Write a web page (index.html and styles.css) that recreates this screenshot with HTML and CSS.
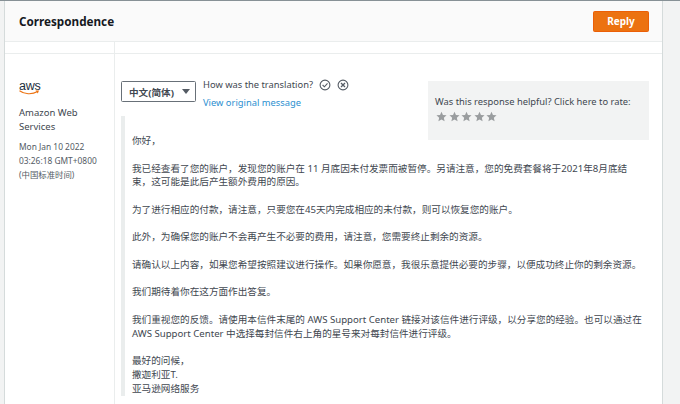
FILE: index.html
```html
<!DOCTYPE html>
<html lang="zh-CN">
<head>
<meta charset="utf-8">
<title>Correspondence</title>
<link rel="stylesheet" href="styles.css">
</head>
<body>
<main class="panel">
  <header class="panel-head">
    <h2 class="panel-title">Correspondence</h2>
    <button class="reply-btn">Reply</button>
  </header>
  <div class="table-head"><div class="head-left"></div><div class="head-right"></div></div>
  <section class="message">
    <aside class="sender">
      <div class="logo">
        <span class="logo-text">aws</span>
        <svg class="logo-smile" width="21" height="6" viewBox="0 0 21 6"><path d="M0.5 0.8C5 4.2 13 4.8 18.6 1.6" fill="none" stroke="#ec7211" stroke-width="1.1"/><path d="M16.6 0.6L20 0.4L18.8 3.4Z" fill="#ec7211"/></svg>
      </div>
      <div class="sender-name">Amazon Web Services</div>
      <div class="sender-date">Mon Jan 10 2022 03:26:18 GMT+0800 (中国标准时间)</div>
    </aside>
    <div class="content">
      <div class="toolbar">
        <div class="lang-select"><span>中文(简体)</span><i class="caret"></i></div>
        <div class="translate">
          <div class="translate-q">
            <span>How was the translation?</span>
            <svg class="tr-icon" width="12" height="12" viewBox="0 0 12 12"><circle cx="6" cy="6" r="4.9" fill="none" stroke="#545b64" stroke-width="1.1"/><path d="M3.6 6L5.4 7.8L8.5 4.4" fill="none" stroke="#545b64" stroke-width="1.1"/></svg>
            <svg class="tr-icon" width="12" height="12" viewBox="0 0 12 12"><circle cx="6" cy="6" r="4.9" fill="none" stroke="#545b64" stroke-width="1.1"/><path d="M4 4L8 8M8 4L4 8" fill="none" stroke="#545b64" stroke-width="1.3"/></svg>
          </div>
          <a class="view-original">View original message</a>
        </div>
        <div class="rate-box">
          <div class="rate-text">Was this response helpful? Click here to rate:</div>
          <div class="stars">
            <svg width="11" height="11" viewBox="0 0 24 24"><path class="star" d="M12 1.5l3.2 7.2 7.8.8-5.9 5.2 1.7 7.7L12 18.4l-6.8 4 1.7-7.7L1 9.5l7.8-.8z"/></svg>
            <svg width="11" height="11" viewBox="0 0 24 24"><path class="star" d="M12 1.5l3.2 7.2 7.8.8-5.9 5.2 1.7 7.7L12 18.4l-6.8 4 1.7-7.7L1 9.5l7.8-.8z"/></svg>
            <svg width="11" height="11" viewBox="0 0 24 24"><path class="star" d="M12 1.5l3.2 7.2 7.8.8-5.9 5.2 1.7 7.7L12 18.4l-6.8 4 1.7-7.7L1 9.5l7.8-.8z"/></svg>
            <svg width="11" height="11" viewBox="0 0 24 24"><path class="star" d="M12 1.5l3.2 7.2 7.8.8-5.9 5.2 1.7 7.7L12 18.4l-6.8 4 1.7-7.7L1 9.5l7.8-.8z"/></svg>
            <svg width="11" height="11" viewBox="0 0 24 24"><path class="star" d="M12 1.5l3.2 7.2 7.8.8-5.9 5.2 1.7 7.7L12 18.4l-6.8 4 1.7-7.7L1 9.5l7.8-.8z"/></svg>
          </div>
        </div>
      </div>
      <blockquote class="body-text">
        <p>你好，</p>
        <p>我已经查看了您的账户，发现您的账户在 11 月底因未付发票而被暂停。另请注意，您的免费套餐将于2021年8月底结束，这可能是此后产生额外费用的原因。</p>
        <p>为了进行相应的付款，请注意，只要您在45天内完成相应的未付款，则可以恢复您的账户。</p>
        <p>此外，为确保您的账户不会再产生不必要的费用，请注意，您需要终止剩余的资源。</p>
        <p>请确认以上内容，如果您希望按照建议进行操作。如果你愿意，我很乐意提供必要的步骤，以便成功终止你的剩余资源。</p>
        <p>我们期待着你在这方面作出答复。</p>
        <p>我们重视您的反馈。请使用本信件末尾的 AWS Support Center 链接对该信件进行评级，以分享您的经验。也可以通过在 AWS Support Center 中选择每封信件右上角的星号来对每封信件进行评级。</p>
        <p>最好的问候，<br>撒迦利亚T.<br>亚马逊网络服务</p>
      </blockquote>
    </div>
  </section>
</main>
</body>
</html>
```
FILE: styles.css
```css
* { box-sizing: border-box; }
html, body { margin: 0; height: 100%; overflow: hidden; }
body {
  background: #f2f3f3;
  border-top: 1px solid #879196;
  padding: 0 17px 0 4px;
  font-family: "Noto Sans", "Noto Sans CJK SC", sans-serif;
  color: #16191f;
  font-size: 9.35px;
}
.panel {
  background: #fff;
  border-left: 1px solid #d5dbdb;
  border-right: 1px solid #d5dbdb;
  height: 403px;
  overflow: hidden;
}
.panel-head {
  height: 41px;
  background: #fafafa;
  border-bottom: 1px solid #eaeded;
  display: flex;
  align-items: center;
  justify-content: space-between;
  padding: 0 13px 0 14px;
}
.panel-title { margin: 0 0 1px; font-size: 11.7px; font-weight: 700; color: #16191f; }
.reply-btn {
  width: 56px;
  height: 21px;
  background: #ec7211;
  border: 1px solid #eb5f07;
  border-radius: 1.5px;
  color: #fff;
  font: 700 10px "Noto Sans", sans-serif;
  padding: 0;
}
.table-head { display: flex; height: 12px; border-bottom: 1px solid #eaeded; }
.head-left { width: 110px; border-right: 1px solid #eaeded; }
.head-right { flex: 1; }
.message { display: flex; height: 350px; }
.sender { width: 110px; border-right: 1px solid #eaeded; padding: 27px 6px 0 14px; flex: none; }
.logo { position: relative; width: 22px; height: 15px; }
.logo-text { display: block; font: 400 12.5px/10px "Liberation Sans", sans-serif; color: #232f3e; letter-spacing: -0.2px; }
.logo-smile { position: absolute; left: 0; top: 9px; }
.sender-name { margin-top: 10px; font-size: 9.5px; line-height: 14px; color: #414750; }
.sender-date { margin-top: 6px; font-size: 8.4px; line-height: 14px; color: #545b64; }
.content { flex: 1; min-width: 0; padding: 27px 13px 0 6px; }
.toolbar { display: flex; align-items: flex-start; }
.lang-select {
  width: 75px;
  height: 21px;
  border: 1px solid #687078;
  border-radius: 1.5px;
  display: flex;
  align-items: center;
  justify-content: space-between;
  padding: 0 3px 0 7px;
  font-weight: 700;
  font-size: 9.6px;
  color: #414750;
  flex: none;
}
.caret { width: 0; height: 0; border: 4px solid transparent; border-top: 5px solid #545b64; border-bottom: 0; margin-right: 2px; }
.translate { margin-left: 7px; width: 225px; flex: none; }
.translate-q { display: flex; align-items: center; height: 9px; margin-top: -1px; color: #414750; line-height: 9px; }
.tr-icon { margin-left: 6px; flex: none; }
.view-original { display: block; margin-top: 7px; color: #2b8fd0; line-height: 13px; }
.rate-box {
  width: 221px;
  height: 59px;
  background: #f2f3f3;
  padding: 14px 7px 0;
  flex: none;
  color: #414750;
  white-space: nowrap;
}
.rate-text { line-height: 13px; font-size: 9.35px; }
.stars { display: flex; gap: 1.55px; margin-top: 3px; padding-left: 1px; }
.star { fill: #9a9d9f; }
.body-text {
  margin: -24px 0 0;
  width: 525px;
  border-left: 4px solid #eaeded;
  padding: 18px 0 0 7px;
  font-size: 9.62px;
  line-height: 13.77px;
  color: #414750;
}
.body-text p { margin: 0 0 13.77px; }
```
